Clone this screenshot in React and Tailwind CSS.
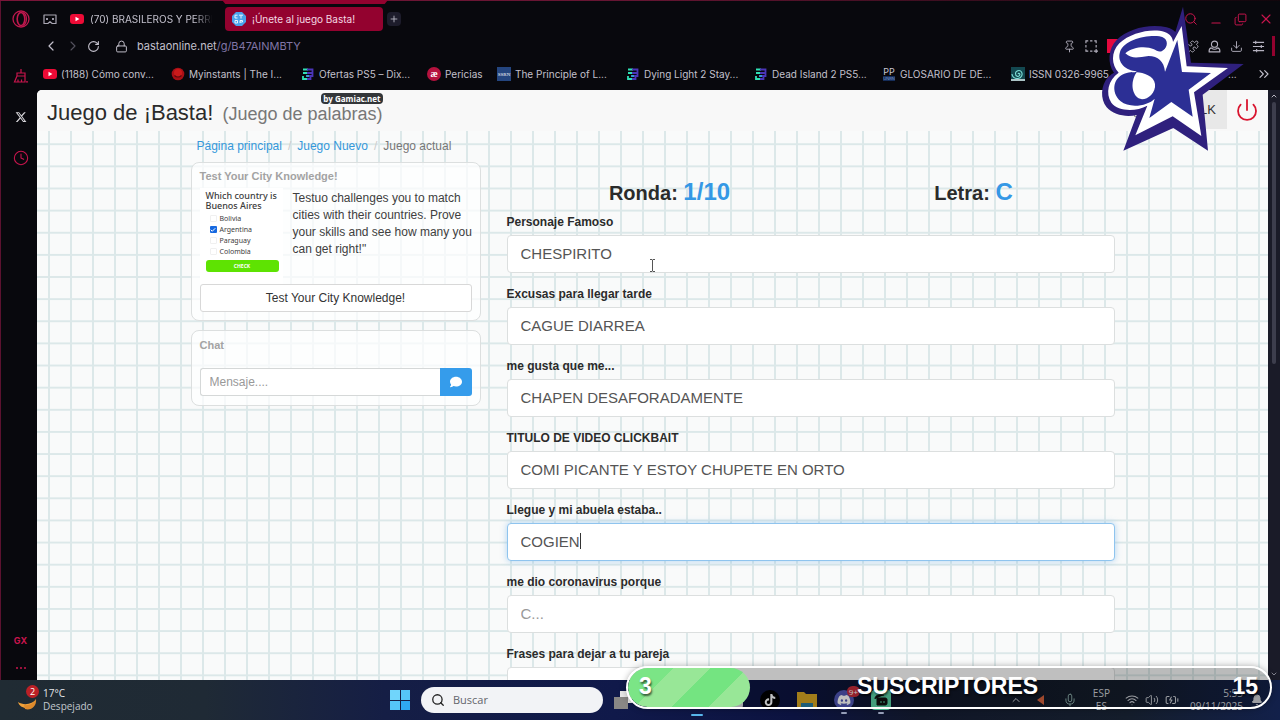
import React from "react";
import {
  ChevronLeft, ChevronRight, RotateCw, Lock, Plus, Search, Minus, Copy, X, Pin,
  Puzzle, Download, ChevronsRight,
  Clock, Power, Wifi, Volume2, BatteryCharging, Mic, ChevronUp, ChevronDown, Bell,
  Check,
} from "lucide-react";
import { FaComment, FaDiscord, FaTiktok, FaXTwitter } from "react-icons/fa6";

const fields = [
  { label: "Personaje Famoso", value: "CHESPIRITO" },
  { label: "Excusas para llegar tarde", value: "CAGUE DIARREA" },
  { label: "me gusta que me...", value: "CHAPEN DESAFORADAMENTE" },
  { label: "TITULO DE VIDEO CLICKBAIT", value: "COMI PICANTE Y ESTOY CHUPETE EN ORTO" },
  { label: "Llegue y mi abuela estaba..", value: "COGIEN", active: true },
  { label: "me dio coronavirus porque", value: "" },
  { label: "Frases para dejar a tu pareja", value: "" },
];

function YouTube() {
  return (
    <svg viewBox="0 0 14 12" className="h-3 w-3.5 shrink-0">
      <rect x="0" y="1" width="14" height="10" rx="3" fill="#ed0b36" />
      <path d="M5.5 3.7v4.6L9.4 6z" fill="#fff" />
    </svg>
  );
}

function Mask() {
  return (
    <svg viewBox="0 0 14 12" className="h-3 w-3.5 shrink-0" fill="none" stroke="#aaa7b4" strokeWidth="1.2">
      <path d="M1 2h12v8.5H9.2L7 8.7l-2.2 1.8H1z" strokeLinejoin="round" />
      <path d="M4 5v2M10 5v2" strokeWidth="1.8" />
    </svg>
  );
}

function Dixgamer() {
  return (
    <svg viewBox="0 0 12 12" className="mx-px size-3 shrink-0" fill="none" strokeWidth="1.8">
      <path d="M1 1.5h5M1 5h5M1 8v3h5" stroke="#2fe0b4" />
      <path d="M5 1.5h5.5v3.5H5M5 8h5.5V5M5 11h3.5V8" stroke="#4a35b8" />
      <path d="M4 8h3" stroke="#35a5d6" />
    </svg>
  );
}

function Myinstants() {
  return (
    <svg viewBox="0 0 14 14" className="size-3.5 shrink-0">
      <circle cx="7" cy="7" r="6.3" fill="#a80f16" />
      <circle cx="7" cy="6" r="4" fill="#c91a1b" />
      <path d="M3.5 8.5c2 2 5 2 7 0" stroke="#58090c" strokeWidth="1.2" fill="none" />
    </svg>
  );
}

function Ae() {
  return (
    <span className="flex size-3.5 shrink-0 items-center justify-center rounded-full bg-[#b5123e] font-['Liberation_Serif',serif] text-[10px] leading-none font-bold text-white">
      æ
    </span>
  );
}

function Ssrn() {
  return (
    <span className="flex size-3.5 shrink-0 items-center justify-center overflow-hidden bg-[#24457f] font-['Liberation_Serif',serif] text-[5px] leading-none text-white">
      SSRN
    </span>
  );
}

function Pp() {
  return (
    <span className="flex size-3.5 shrink-0 flex-col items-center justify-center leading-none text-[#c9c7d2]">
      <span className="text-[9px] leading-[9px]">PP</span>
      <span className="bg-[#152d5a] text-[4px] leading-[5px] text-[#7f9fd0]">UNRN</span>
    </span>
  );
}

function Spiral() {
  return (
    <svg viewBox="0 0 14 14" className="size-3.5 shrink-0">
      <rect width="14" height="14" fill="#134850" />
      <path d="M7 7c1-1.5 2.5 0 1.5 1.5S4.5 9.5 4.5 6.5 9 2.5 10.5 5s0 6-3.5 6.5-6-2-6-4.5" fill="none" stroke="#7fe0d8" strokeWidth="1.1" />
      <path d="M0 13h14" stroke="#e0eeee" strokeWidth="1.5" />
    </svg>
  );
}

function CaptureIcon() {
  return (
    <svg viewBox="0 0 14 14" className="size-[13px]" fill="none" stroke="currentColor" strokeWidth="1.2">
      <path d="M1 3.500V1h2.500M5.500 1h2.500M10 1h2v2.500M1 5.500V8M12 5.500V8M1 10v2h2.500M5.500 12H8M9.500 12h4.500M12 9.800v4.200" />
    </svg>
  );
}

function ProfileIcon() {
  return (
    <svg viewBox="0 0 14 14" className="size-[13px]" fill="none" stroke="currentColor" strokeWidth="1.2">
      <circle cx="7" cy="4.500" r="3.300" />
      <path d="M3.500 8.500C1.500 9 1 10 1.200 12.800h11.600C13 10 12.500 9 10.500 8.500c-2 1.700-5 1.700-7 0z" strokeLinejoin="round" />
    </svg>
  );
}

function SettingsIcon() {
  return (
    <svg viewBox="0 0 14 14" className="size-[13px]" fill="none" stroke="currentColor" strokeWidth="1.200">
      <path d="M1 2.500h12M1 7h12M1 11.500h12M4 .8v3.400M10 5.300v3.400M5 9.800v3.400" />
    </svg>
  );
}

const bookmarks = [
  { icon: <YouTube />, text: "(1188) Cómo conv...", w: "w-32" },
  { icon: <Myinstants />, text: "Myinstants | The I...", w: "w-[130px]" },
  { icon: <Dixgamer />, text: "Ofertas PS5 – Dix...", w: "w-[126px]" },
  { icon: <Ae />, text: "Pericias", w: "w-[70px]" },
  { icon: <Ssrn />, text: "The Principle of L...", w: "w-[129px]" },
  { icon: <Dixgamer />, text: "Dying Light 2 Stay...", w: "w-32" },
  { icon: <Dixgamer />, text: "Dead Island 2 PS5...", w: "w-32" },
  { icon: <Pp />, text: "GLOSARIO DE DE...", w: "w-[129px]" },
  { icon: <Spiral />, text: "ISSN 0326-9965", w: "w-[217px]" },
  { icon: null, text: "...", w: "w-3" },
];

function Sidebar() {
  return (
    <aside className="flex w-[37px] shrink-0 flex-col items-center border-l border-[#5c1230] pl-[3px] text-[#c8154d]">
      <button aria-label="Opera" className="mt-2.5 flex h-[18px] items-center">
        <svg viewBox="0 0 18 18" className="size-[18px]" fill="none" stroke="#c0184e" strokeWidth="1.3">
          <circle cx="9" cy="9" r="8" />
          <ellipse cx="9" cy="9" rx="3.8" ry="6.5" strokeWidth="1.6" />
          <path d="M11 2.500c4.500 2 4.500 11 0 13" />
        </svg>
      </button>
      <button aria-label="Limpiar" className="mt-10 flex h-4 items-center">
        <svg viewBox="0 0 16 16" className="size-4" fill="none" stroke="currentColor" strokeWidth="1.2">
          <path d="M8 1v4M4 5h8v3H4zM4 8l-2.500 6h10.500V8M5 14v-2.500M8.500 14v-2.500M13 13.800h2" />
        </svg>
      </button>
      <button aria-label="X" className="mt-[26px] flex h-3.5 items-center text-[#d8d7dc]">
        <FaXTwitter className="size-3" />
      </button>
      <button aria-label="Historial" className="mt-[26px] flex h-4 items-center">
        <Clock className="size-4" strokeWidth={1.6} />
      </button>
      <button aria-label="GX" className="mt-auto h-4 text-[9px] leading-4 font-bold">GX</button>
      <button aria-label="Más" className="mt-[11px] mb-1 flex h-4 items-center gap-0.5">
        <i className="size-0.5 rounded-full bg-current" />
        <i className="size-0.5 rounded-full bg-current" />
        <i className="size-0.5 rounded-full bg-current" />
      </button>
    </aside>
  );
}

function BrowserChrome() {
  return (
    <div className="shrink-0 text-[10px] text-[#c3c0cc]">
      <div className="flex h-9 items-center pt-0.5 pr-1.5 pl-1.5">
        <Mask />
        <button className="ml-[13px] flex w-[142px] items-center gap-1.5 overflow-hidden text-left whitespace-nowrap">
          <YouTube />
          <span className="[mask-image:linear-gradient(to_right,black_85%,transparent)]">(70) BRASILEROS Y PERRI</span>
        </button>
        <button className="ml-[13px] flex h-6 w-[158px] items-center gap-1.5 rounded-sm bg-[#93022f] px-[7px] text-left text-[#f3d8e2]">
          <svg viewBox="0 0 14 14" className="size-3.5 shrink-0">
            <path d="M4 0h6l4 4v6l-4 4H4l-4-4V4z" fill="#4aa3ea" />
            <path d="M3 3.2h2.5M3 3.2V6h2.5M7 3.2h4M9 3.2V6.500M3 8.500h2.500V11H3zM8 11V8.500h2.500V10H8" stroke="#e9f5ff" fill="none" />
          </svg>
          ¡Únete al juego Basta!
        </button>
        <button aria-label="Nueva pestaña" className="ml-1 flex size-3.5 items-center justify-center rounded-sm bg-[#1d1c2b]">
          <Plus className="size-2.5" />
        </button>
        <div className="ml-auto flex items-center gap-[11px] text-[#c8154d]">
          <button aria-label="Buscar"><Search className="size-3.5" strokeWidth={1.7} /></button>
          <button aria-label="Minimizar"><Minus className="mt-2 size-3.5" strokeWidth={2} /></button>
          <button aria-label="Restaurar"><Copy className="size-[13px] -scale-x-100 -rotate-180" strokeWidth={1.8} /></button>
          <button aria-label="Cerrar"><X className="size-4" strokeWidth={1.6} /></button>
        </div>
      </div>
      <div className="flex h-5 items-center pl-1.5 text-[11px]">
        <button aria-label="Atrás"><ChevronLeft className="size-4" strokeWidth={1.8} /></button>
        <button aria-label="Adelante" className="ml-1.5 text-[#54525e]"><ChevronRight className="size-4" strokeWidth={1.6} /></button>
        <button aria-label="Recargar" className="ml-1.5"><RotateCw className="size-[13px]" strokeWidth={2} /></button>
        <Lock className="mr-[9px] ml-[15px] size-[13px]" strokeWidth={1.8} />
        <span>bastaonline.net<span className="text-[#8176a6]">/g/B47AINMBTY</span></span>
        <div className="ml-auto flex items-center gap-[9px] text-[#b5b2c0]">
          <button aria-label="Fijar"><Pin className="size-[13px]" strokeWidth={1.7} /></button>
          <button aria-label="Captura"><CaptureIcon /></button>
          <span className="mr-[56px] size-3.5 bg-[#e5093f]" />
          <button aria-label="Extensiones"><Puzzle className="size-[13px]" strokeWidth={1.7} /></button>
          <button aria-label="Perfil"><ProfileIcon /></button>
          <button aria-label="Descargas"><Download className="size-[13px]" strokeWidth={1.7} /></button>
          <button aria-label="Ajustes"><SettingsIcon /></button>
          <span className="mr-[5px] -ml-0.5 h-5 w-[3px] bg-[#93022f]" />
        </div>
      </div>
      <div className="flex h-[34px] items-center pt-0.5 pr-2 pl-1.5 whitespace-nowrap">
        {bookmarks.map((b) => (
          <a key={b.text} href="#" className={"flex shrink-0 items-center gap-1 " + b.w}>
            {b.icon}
            {b.text}
          </a>
        ))}
        <button aria-label="Más marcadores" className="ml-auto"><ChevronsRight className="size-4" strokeWidth={1.7} /></button>
      </div>
    </div>
  );
}

function GraphPaper() {
  return (
    <svg className="absolute inset-0 h-full w-full" aria-hidden="true">
      <defs>
        <pattern id="grid" width="22" height="22.13" patternUnits="userSpaceOnUse" patternTransform="translate(11 9)">
          <path d="M1 0v22.13M0 1h22" stroke="#dce8e9" strokeWidth="2" fill="none" />
        </pattern>
      </defs>
      <rect width="100%" height="100%" fill="#f9fafa" />
      <rect width="100%" height="100%" fill="url(#grid)" />
    </svg>
  );
}

function QuizThumb() {
  return (
    <div className="w-[83px] shrink-0 bg-white pt-[3px] pl-1.5 font-['Noto_Sans',sans-serif] text-[#3c3c3c]">
      <p className="text-[9px] leading-[10px] font-medium whitespace-nowrap">Which country is<br />Buenos Aires</p>
      <div className="mt-0.5 pl-1">
        {["Bolivia", "Argentina", "Paraguay", "Colombia"].map((c) => (
          <div key={c} className="flex h-[11px] items-center gap-[3px] text-[7px] leading-[11px]">
            {c === "Argentina" ? (
              <span className="flex size-[7px] items-center justify-center rounded-[1px] bg-[#1769e0] text-white">
                <Check className="size-[6px]" strokeWidth={4} />
              </span>
            ) : (
              <span className="size-[7px] rounded-[1px] border border-[#f0f0f0]" />
            )}
            {c}
          </div>
        ))}
      </div>
      <div className="mt-[3px] h-3 w-[73px] rounded-[3px] bg-[#5ee302] text-center text-[5px] leading-3 font-bold text-white">CHECK</div>
    </div>
  );
}

function LeftColumn() {
  return (
    <div className="w-[290px] shrink-0">
      <nav className="flex h-[31px] items-center gap-1.5 pb-0.5 pl-1.5 text-[12px]">
        <a href="#" className="text-[#3498db]">Página principal</a>
        <span className="text-[#ccc]">/</span>
        <a href="#" className="text-[#3498db]">Juego Nuevo</a>
        <span className="text-[#ccc]">/</span>
        <span className="text-[#777]">Juego actual</span>
      </nav>
      <section className="rounded-lg border border-[#dcdfdf] bg-white/70 px-2 pt-[5px] pb-2">
        <h2 className="text-[11px] leading-4 font-bold text-[#a3a3a3]">Test Your City Knowledge!</h2>
        <div className="mt-1 flex h-24 gap-2.5">
          <QuizThumb />
          <p className="pt-0.5 text-[12px] leading-[17px] whitespace-nowrap text-[#404040]">
            Testuo challenges you to match<br />cities with their countries. Prove<br />your skills and see how many you<br />can get right!"
          </p>
        </div>
        <button className="h-7 w-full rounded-[3px] border border-[#d8d8d8] bg-white text-[12px] text-[#333]">
          Test Your City Knowledge!
        </button>
      </section>
      <section className="mt-[9px] rounded-lg border border-[#dcdfdf] bg-white/70 px-2 pt-1.5 pb-[9px]">
        <h2 className="text-[11px] leading-4 font-bold text-[#a3a3a3]">Chat</h2>
        <div className="mt-[15px] flex h-7">
          <input aria-label="Mensaje" placeholder="Mensaje...." className="min-w-0 flex-1 rounded-l-[3px] border border-r-0 border-[#d5d8d8] bg-white px-[9px] text-[12px] placeholder:text-[#999]" />
          <button aria-label="Enviar" className="flex w-8 items-center justify-center rounded-r-[3px] bg-[#359ceb] text-white">
            <FaComment className="size-3" />
          </button>
        </div>
      </section>
    </div>
  );
}

function GameForm() {
  return (
    <div className="min-w-0 flex-1 pt-[47px]">
      <div className="flex h-[27px] text-[20px] leading-7 font-bold text-[#2b2b2b]">
        <div className="flex-1 pl-[22px] text-center">Ronda: <span className="text-[24px] text-[#3598e5]">1/10</span></div>
        <div className="flex-1 pl-[22px] text-center">Letra: <span className="text-[24px] text-[#3598e5]">C</span></div>
      </div>
      <div className="flex flex-col">
        {fields.map((f, i) => (
          <div key={f.label} className="relative h-[72px]">
            <label htmlFor={"field" + i} className="flex h-[30px] items-center pt-1 text-[12px] font-bold text-[#2b2b2b]">{f.label}</label>
            <input
              id={"field" + i}
              defaultValue={f.value}
              placeholder="C..."
              className={
                f.active
                  ? "block h-[38px] w-full rounded border border-[#8fc4ee] bg-white px-[13px] pb-0.5 text-[15px] text-[#555] shadow-[0_0_6px_rgba(102,175,233,0.5)] outline-none"
                  : "block h-[38px] w-full rounded border border-[#dcdfdf] bg-white px-[13px] pb-0.5 text-[15px] text-[#555] outline-none placeholder:text-[#999]"
              }
            />
            {f.active && <span className="absolute top-10 left-[73px] h-4 w-px bg-[#333]" />}
            {i === 0 && (
              <svg viewBox="0 0 7 13" className="absolute top-[54px] left-[142px] h-[13px] w-[7px]" fill="none" stroke="#555">
                <path d="M1 .5h2l.5.5.5-.5h2M1 12.5h2l.5-.5.5.5h2M3.5 1v11" />
              </svg>
            )}
          </div>
        ))}
      </div>
    </div>
  );
}

function Page() {
  return (
    <div className="flex min-h-0 flex-1 overflow-hidden rounded-tl-[5px] bg-[#1a1b28] font-['Liberation_Sans',Arial,sans-serif]">
      <main className="relative min-w-0 flex-1 overflow-hidden">
        <GraphPaper />
        <div className="relative">
          <header className="flex h-[41px] items-start justify-between bg-[#f8f8f8] pl-2.5">
            <h1 className="relative mt-2 text-[22px] leading-[30px] text-[#2b2b2b]">
              Juego de ¡Basta! <small className="ml-[3px] text-[18px] text-[#777]">(Juego de palabras)</small>
              <span className="absolute -top-[5px] right-0 rounded-sm bg-[#333639] px-0.5 font-['Open_Sans',sans-serif] text-[8px] leading-[11px] font-bold text-white">by Gamiac.net</span>
            </h1>
            <div className="flex items-center">
              <Copy className="mr-3 size-4 text-[#888]" strokeWidth={1.6} />
              <button className="h-[39px] w-[70px] bg-[#e8e8e8] pr-[11px] text-right text-[13px] text-[#333]">CHALK</button>
              <button aria-label="Salir" className="flex w-[41px] justify-center pr-0.5 text-[#d9152f]"><Power className="size-6" strokeWidth={1.8} /></button>
            </div>
          </header>
          <div className="mx-auto flex max-w-[924px] gap-[26px]">
            <LeftColumn />
            <GameForm />
          </div>
        </div>
      </main>
      <div className="flex w-3 shrink-0 flex-col items-center justify-between text-[#b6b5c0]">
        <ChevronUp className="mt-0.5 size-2" strokeWidth={3} />
        <span className="mt-0.5 mb-auto h-[262px] w-1 rounded-full bg-[#3d3e4d]" />
        <ChevronDown className="mb-0.5 size-2" />
      </div>
    </div>
  );
}

function Taskbar() {
  return (
    <footer className="relative flex h-10 shrink-0 items-center bg-[linear-gradient(to_right,#202b33_0%,#1f2a35_16%,#151e45_30%,#10194a_48%,#0c1340_62%,#101627_72%,#141d2b_88%,#12204a_100%)] font-['Open_Sans',sans-serif] text-[10px] text-[#e4e6ea]">
      <button className="flex items-center gap-1 pl-4 text-left">
        <span className="relative flex size-[23px]">
          <svg viewBox="0 0 23 23" className="size-[23px]">
            <path d="M2 13c2 8 16 9 18-3-3 5-12 7-18 3z" fill="#f0a13a" />
            <path d="M8 16c5 1 10-2 12-6 1 7-5 12-11 10" fill="#dd8a2c" />
          </svg>
          <span className="absolute -top-1 right-0 flex size-[13px] items-center justify-center rounded-full bg-[#bb2026] text-[9px] leading-none text-white">2</span>
        </span>
        <span className="leading-[13px]">17°C<br /><span className="text-[#c2c8ce]">Despejado</span></span>
      </button>
      <div className="absolute left-[390px] flex h-10 items-center">
        <button aria-label="Inicio" className="grid size-5 grid-cols-2 gap-px">
          <i className="bg-[#70d5fb]" /><i className="bg-[#55c5f8]" /><i className="bg-[#55c5f8]" /><i className="bg-[#2fa9f3]" />
        </button>
        <label className="ml-[11px] flex h-[26px] w-[182px] items-center gap-2 rounded-full bg-[#f2f3f6] px-2.5 text-[#222]">
          <Search className="size-3.5 shrink-0" strokeWidth={2.2} />
          <input aria-label="Buscar" placeholder="Buscar" className="w-full min-w-0 bg-transparent text-[11px] outline-none placeholder:text-[#63656b]" />
        </label>
        <span className="relative ml-[11px] size-[18px]">
          <i className="absolute top-0 right-0 size-3 bg-[#e7e7e7]" />
          <i className="absolute bottom-0 left-0 h-3 w-3.5 bg-[#898785]" />
        </span>
        <i className="mb-1 ml-[59px] h-0.5 w-3 self-end rounded-full bg-[#59b8ee]" />
        <span className="ml-[22px] size-[18px] rounded-sm bg-[#d8dbe0]" />
        <span className="ml-[17px] flex size-5 items-center justify-center rounded-full bg-black text-white"><FaTiktok className="size-3" /></span>
        <svg viewBox="0 0 20 18" className="ml-[17px] h-[18px] w-5">
          <path d="M0 1h7l2 2h11v15H0z" fill="#d9a723" />
          <path d="M4 12h12v6H4z" fill="#287da0" />
        </svg>
        <span className="relative ml-[17px] flex size-5 items-center justify-center rounded-full bg-[#4f56b5] text-white">
          <FaDiscord className="size-3.5" />
          <i className="absolute -top-1 -right-1.5 rounded-full bg-[#c62d3c] px-0.5 text-[8px] leading-[11px] not-italic">9+</i>
          <i className="absolute -bottom-1 h-0.5 w-1.5 rounded-full bg-[#9aa3bd]" />
        </span>
        <span className="relative ml-[17px] flex size-5 items-center justify-center rounded bg-[#5ad3a6]">
          <svg viewBox="0 0 14 12" className="h-3 w-3.5">
            <path d="M1 5c0-2 1-4 5-4h4M3 4h8c2 0 2 1 2 2v3c0 2-1 2-2 2H3z" fill="#111" stroke="#111" />
            <path d="M7 7v2M10 7v2" stroke="#5ad3a6" />
          </svg>
          <i className="absolute -bottom-1 h-0.5 w-1.5 rounded-full bg-[#9aa3bd]" />
        </span>
      </div>
      <div className="ml-auto flex items-center pr-[17px] text-[#cfd2d8]">
        <ChevronUp className="size-3" />
        <svg viewBox="0 0 8 10" className="ml-[15px] h-2.5 w-2"><path d="M7 0v10L0 5z" fill="#d4623d" /></svg>
        <Mic className="ml-[18px] size-3.5 text-[#91b4ae]" strokeWidth={1.6} />
        <span className="ml-4 text-center leading-[13px]">ESP<br />ES</span>
        <Wifi className="ml-[15px] size-3.5" strokeWidth={1.8} />
        <Volume2 className="ml-1.5 size-3.5" strokeWidth={1.6} />
        <BatteryCharging className="ml-1.5 size-3.5" strokeWidth={1.8} />
        <span className="ml-[11px] text-right leading-[13px]">5:55<br />09/11/2025</span>
        <Bell className="ml-2 size-3" fill="currentColor" />
      </div>
    </footer>
  );
}

function SubscriberGoal() {
  return (
    <div className="absolute right-2 bottom-[11px] flex h-[43px] w-[646px] items-center overflow-hidden rounded-full border-2 border-white bg-black/25 font-['Liberation_Sans',Arial,sans-serif] text-[23px] font-bold text-white shadow-[0_0_6px_rgba(0,0,0,0.3)] [text-shadow:1px_2px_2px_rgba(0,0,0,0.6)]">
      <div className="flex h-full w-[122px] items-center rounded-full bg-[linear-gradient(135deg,#7be586_28%,#98e797_28%,#98e797_51%,#74e481_51%,#74e481_74%,#98e797_74%)] pb-0.5 pl-[11px]">3</div>
      <span className="ml-[107px] pb-0.5">SUSCRIPTORES</span>
      <span className="mr-3 ml-auto pb-0.5">15</span>
    </div>
  );
}

function StarLogo() {
  return (
    <svg viewBox="0 0 450 450" className="absolute top-1 right-[34px] size-[150px]">
      <path d="M261 8L285 176 443 180 320 272 336 440 232 372 82 440 122 333C92 340 52 334 32 310 12 286 14 244 36 220 44 212 50 208 54 206 34 180 36 134 62 108 96 74 160 58 212 70 226 74 234 79 238 84Z" fill="#2f207d" />
      <path d="M257 66L272 187 396 192 294 265 316 396 230 337 118 394 154 305C118 324 66 322 46 296 28 268 36 228 68 206 46 184 44 144 70 118 104 86 168 72 206 84 222 90 230 100 231 114Z" fill="#fff" />
      <path d="M244 108L258 204 345 207 278 257 290 338 226 294 160 342 176 284C156 306 100 314 74 292 42 264 52 216 92 207 110 203 118 207 122 202 90 200 62 176 72 144 84 108 150 92 190 97 216 101 218 122 204 140L196 156C208 164 210 180 207 203Z" fill="#2c2f95" />
      <path d="M88 148C112 127 152 126 174 136 186 142 198 154 218 118L230 112 207 203C204 172 186 156 158 156 126 160 108 166 88 148Z" fill="#fff" />
      <path d="M122 205C142 206 174 216 177 240 180 266 156 286 138 286 108 282 100 236 122 205Z" fill="#fff" />
    </svg>
  );
}

export default function App() {
  return (
    <div className="relative flex h-screen flex-col overflow-hidden bg-[#08080d] font-['Inter',sans-serif]">
      <div className="flex min-h-0 flex-1">
        <Sidebar />
        <div className="flex min-w-0 flex-1 flex-col">
          <BrowserChrome />
          <Page />
        </div>
      </div>
      <Taskbar />
      <div className="absolute inset-x-0 top-0 h-px bg-[linear-gradient(to_right,#7a1539,#651532_50%,#12060c)]" />
      <div className="absolute top-0 left-[222px] h-1 w-[166px] bg-[#93022f] [clip-path:polygon(0_0,100%_0,98%_100%,2%_100%)]" />
      <SubscriberGoal />
      <StarLogo />
    </div>
  );
}
